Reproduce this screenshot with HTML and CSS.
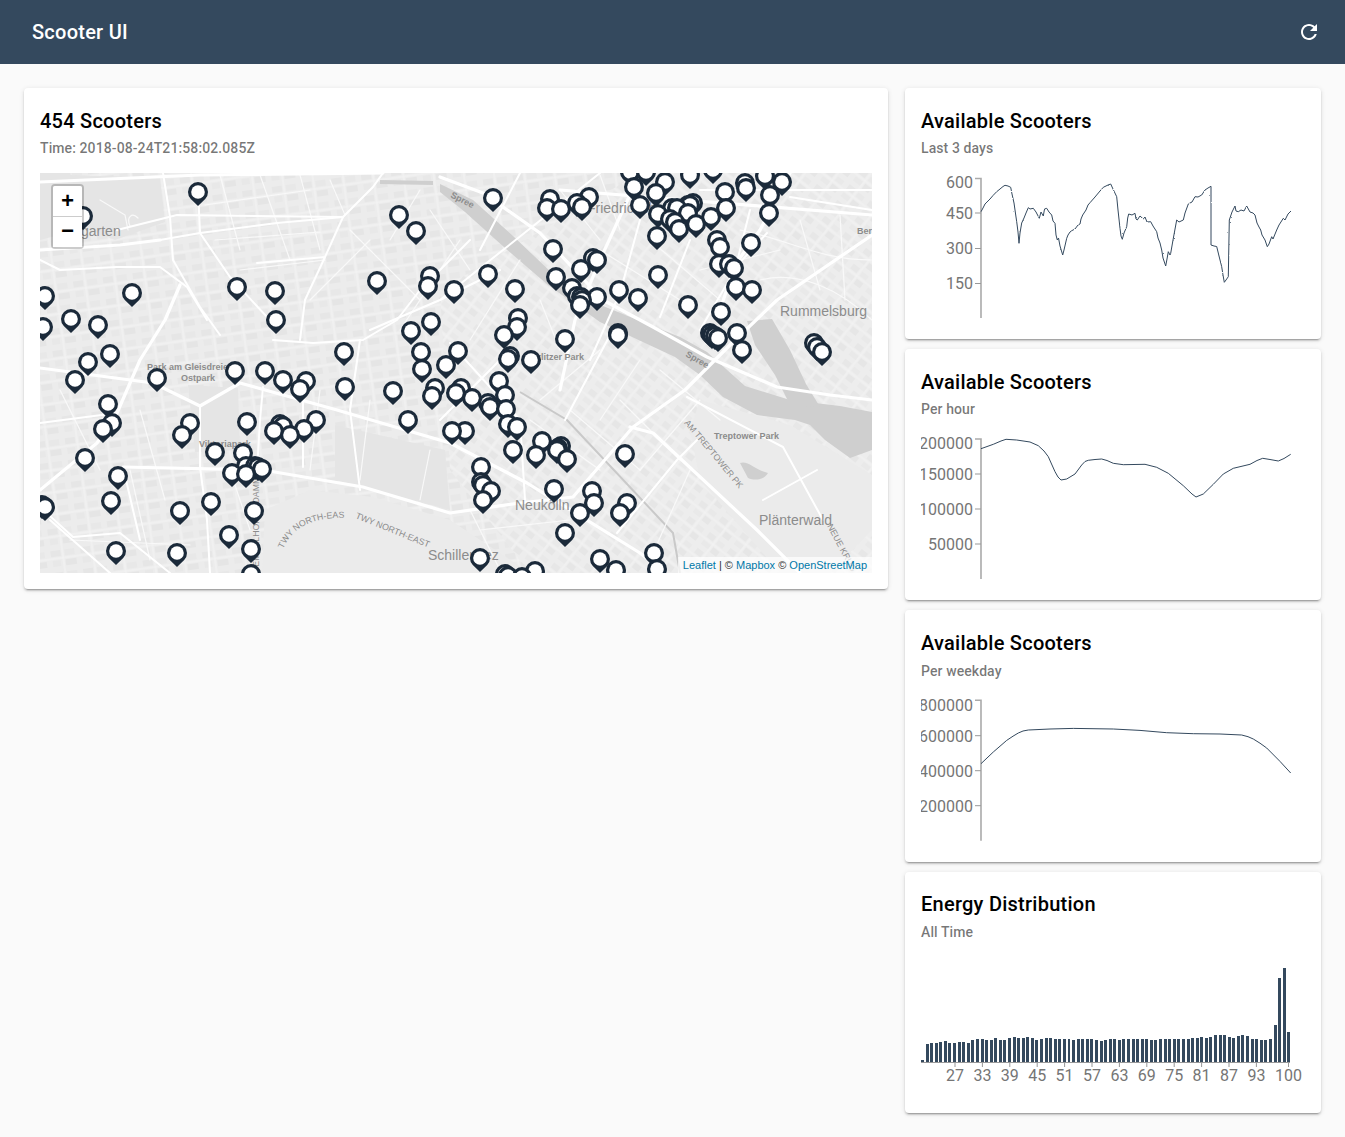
FILE: index.html
```html
<!DOCTYPE html>
<html lang="en">
<head>
<meta charset="utf-8">
<title>Scooter UI</title>
<link rel="stylesheet" href="styles.css">
</head>
<body>
<header class="appbar">
  <span class="appbar-title">Scooter UI</span>
  <button class="icon-button" aria-label="Refresh">
    <svg viewBox="0 0 24 24" width="24" height="24"><path d="M17.65 6.35C16.2 4.9 14.21 4 12 4c-4.42 0-7.99 3.58-7.99 8s3.57 8 7.99 8c3.73 0 6.84-2.55 7.73-6h-2.08c-.82 2.33-3.04 4-5.65 4-3.31 0-6-2.69-6-6s2.69-6 6-6c1.66 0 3.14.69 4.22 1.78L13 11h7V4l-2.35 2.35z"/></svg>
  </button>
</header>
<main class="layout">
  <section class="card">
    <h2 class="card-title">454 Scooters</h2>
    <p class="card-sub">Time: 2018-08-24T21:58:02.085Z</p>
    <div class="map">
      <svg class="map-svg" viewBox="40 173 832 400" width="832" height="400">
        <defs>
          <g id="pin">
            <path class="pin-o" d="M0 14L-7.2 7A10 10 0 1 1 7.2 7Z"/>
            <circle class="pin-i" r="6.8"/>
          </g>
          <pattern id="blocks" width="30" height="22" patternUnits="userSpaceOnUse" patternTransform="rotate(-8)">
            <rect width="30" height="22" fill="#ececec"/>
            <rect x="3" y="3" width="10" height="6" fill="#e6e6e6"/>
            <rect x="17" y="3" width="10" height="6" fill="#e8e8e8"/>
            <rect x="4" y="13" width="8" height="6" fill="#e8e8e8"/>
            <rect x="17" y="13" width="11" height="6" fill="#e5e5e5"/>
            <path d="M0 11H30M15 0V22" stroke="#f4f4f4" stroke-width="1" fill="none"/>
          </pattern>
          <pattern id="blocks2" width="26" height="20" patternUnits="userSpaceOnUse" patternTransform="rotate(38)">
            <rect width="26" height="20" fill="#ededed"/>
            <rect x="3" y="2" width="8" height="6" fill="#e7e7e7"/>
            <rect x="15" y="3" width="8" height="5" fill="#e9e9e9"/>
            <rect x="3" y="12" width="9" height="5" fill="#e9e9e9"/>
            <rect x="15" y="12" width="8" height="6" fill="#e6e6e6"/>
            <path d="M0 10H26M13 0V20" stroke="#f4f4f4" stroke-width="1" fill="none"/>
          </pattern>
        </defs>
        <rect x="40" y="173" width="832" height="400" fill="url(#blocks)"/>
        <path fill="url(#blocks2)" d="M440 290L640 173H872V573H530L450 470Z"/>
        <path class="park" d="M70 175L160 178L165 222L115 240L85 228Z"/>
        <path class="park" d="M40 172H70L85 228L40 240Z"/>
        <path class="park2" d="M265 510L310 490L373 497L450 520L530 573H262Z"/>
        <path class="park" d="M188 385L238 388L240 450L195 452Z"/>
        <path class="park" d="M335 425L445 450L450 510L375 490L335 480Z"/>
        <path class="park2" d="M700 400L790 425L872 475V530L830 573H780L700 480L690 430Z"/>
        <path class="water-line" d="M380 182L433 183"/>
        <path class="water" d="M440 184L473 200L513 236L553 274L603 306L680 337L707 352L745 386L790 400L840 406L872 412V450L850 458L825 440L810 425L795 420L757 415L723 397L700 375L675 357L600 322L548 285L505 248L465 212L440 192Z"/>
        <path class="water" d="M747 321L772 319L790 350L806 384L820 407L790 405L775 375L755 345Z"/>
        <path class="water" d="M740 463C748 460 755 470 768 473C764 480 755 481 748 478Z"/>
        <path class="rail" d="M520 392L567 420L673 533L680 573"/>
        <g class="road-sm">
          <path d="M100 200L125 215L128 230M130 226C126 217 132 212 138 218"/>
          <path d="M220 175L240 250M260 175L290 260M300 175L320 250M330 180L345 215M205 205L310 190M215 240L320 232M240 270L325 260M350 230L420 300M370 240L310 300M420 190L390 240M430 210L470 270M460 240L400 330M520 260L470 340"/>
          <path d="M740 230C790 240 820 260 872 260M760 280C800 270 840 290 872 320M800 220L820 290M840 215L845 300"/>
          <path d="M60 390L100 470M130 470L150 560M70 540L190 545M140 410L165 500M230 470L250 530M320 390L310 470M370 400L360 480M430 450L420 500"/>
          <path d="M470 510L500 570M480 530L570 520M530 420L600 470M570 410L640 470M620 400L680 460M690 470L650 560"/>
          <path d="M560 190L600 240M600 175L620 230M650 240L720 300M700 270L780 250M600 250L680 300M540 300L560 350M600 350L540 400M640 360L600 420M660 370L720 420M700 400L640 470"/>
        </g>
        <g class="road-md">
          <path d="M117 230L177 215L343 217L373 187L383 173"/>
          <path d="M160 240L200 233L277 223L343 217"/>
          <path d="M163 173L170 217L173 260L200 307L220 335"/>
          <path d="M198 190L200 233L230 277L267 317"/>
          <path d="M325 257L305 300L300 340M325 257L343 217M257 263L325 257"/>
          <path d="M40 260L60 270L117 267L160 267L187 287L207 320"/>
          <path d="M273 340L313 343L363 340L397 320L420 290L470 240"/>
          <path d="M440 300L600 173M370 330L440 300L500 270M520 173L480 250M640 220L620 293L590 360M690 240L660 317M750 210L735 270L700 330"/>
          <path d="M263 387L260 420L257 470M303 383L303 467M200 406L200 467L207 520L210 573"/>
          <path d="M40 507L73 537L120 533L170 573M50 520L110 573"/>
          <path d="M40 423L117 413M123 467L140 540"/>
          <path d="M790 197L872 210M767 233L733 270M700 190L872 190M450 343L520 420L525 500M500 360L440 420M360 340L350 410L360 490"/>
          <path d="M617 533L677 460L697 440M687 397L783 447L823 520M763 500L817 470M565 420L610 335"/>
        </g>
        <g class="road-lg">
          <path d="M40 368L153 383L200 406L240 383L337 410L450 443L527 483L640 553L665 573"/>
          <path d="M123 467L263 470L363 487L450 513L520 503L573 497L633 427L685 390L730 345L777 300L872 235"/>
          <path d="M630 427L653 433L757 530L800 573"/>
          <path d="M40 490L97 443L117 413L140 360L165 320L180 285"/>
          <path d="M440 177L483 193L540 233L603 300L653 327L707 357L777 387L830 395L872 400"/>
          <path d="M40 250L120 245L160 240M40 182L200 175L383 173"/>
          <path d="M640 173L600 260L575 320L560 390"/>
          <path d="M790 173L760 230L735 265L720 310"/>
          <path d="M560 190L872 215"/>
        </g>
        <g class="lbl">
          <text x="81" y="236">garten</text>
          <text x="587" y="213">Friedrichshain</text>
          <text x="780" y="316">Rummelsburg</text>
          <text x="515" y="510">Neukölln</text>
          <text x="759" y="525">Plänterwald</text>
          <text x="428" y="560">Schillerkiez</text>
        </g>
        <g class="lbl-s">
          <text x="147" y="370">Park am Gleisdreieck</text>
          <text x="198" y="381" text-anchor="middle">Ostpark</text>
          <text x="584" y="360" text-anchor="end">Görlitzer Park</text>
          <text x="199" y="447">Viktoriapark</text>
          <text x="714" y="439">Treptower Park</text>
          <text x="857" y="234">Ber</text>
          <text transform="translate(450 197) rotate(27)">Spree</text>
          <text transform="translate(685 356) rotate(30)">Spree</text>
        </g>
        <g class="lbl-t">
          <path id="twy" class="text-guide" d="M283 549Q297 516 346 518"/>
          <text><textPath href="#twy">TWY NORTH-EAST</textPath></text>
          <text transform="translate(684 423) rotate(50)">AM TREPTOWER PK</text>
          <text transform="translate(827 526) rotate(62)">NEUE KRUG</text>
          <text transform="translate(355 518) rotate(22)">TWY NORTH-EAST</text>
          <text transform="translate(259 572) rotate(-90)">TEMPELHOFER DAMM</text>
        </g>
        <g>
          <use href="#pin" x="713" y="170"/><use href="#pin" x="630" y="172"/><use href="#pin" x="646" y="172"/><use href="#pin" x="690" y="175"/><use href="#pin" x="765" y="176"/>
          <use href="#pin" x="665" y="182"/><use href="#pin" x="782" y="182"/><use href="#pin" x="745" y="183"/><use href="#pin" x="634" y="187"/><use href="#pin" x="746" y="188"/>
          <use href="#pin" x="725" y="192"/><use href="#pin" x="198" y="192"/><use href="#pin" x="656" y="193"/><use href="#pin" x="770" y="195"/><use href="#pin" x="589" y="197"/><use href="#pin" x="493" y="198"/><use href="#pin" x="550" y="199"/>
          <use href="#pin" x="577" y="203"/><use href="#pin" x="693" y="203"/><use href="#pin" x="640" y="205"/><use href="#pin" x="688" y="205"/><use href="#pin" x="690" y="205"/><use href="#pin" x="582" y="207"/><use href="#pin" x="672" y="208"/><use href="#pin" x="677" y="208"/><use href="#pin" x="726" y="208"/><use href="#pin" x="547" y="208"/><use href="#pin" x="561" y="209"/>
          <use href="#pin" x="769" y="213"/><use href="#pin" x="688" y="213"/><use href="#pin" x="658" y="214"/><use href="#pin" x="399" y="215"/><use href="#pin" x="83" y="216"/><use href="#pin" x="711" y="217"/><use href="#pin" x="670" y="219"/>
          <use href="#pin" x="675" y="222"/><use href="#pin" x="696" y="224"/><use href="#pin" x="679" y="229"/><use href="#pin" x="416" y="231"/><use href="#pin" x="657" y="236"/>
          <use href="#pin" x="717" y="240"/><use href="#pin" x="751" y="243"/><use href="#pin" x="720" y="247"/><use href="#pin" x="553" y="249"/><use href="#pin" x="593" y="258"/>
          <use href="#pin" x="597" y="260"/><use href="#pin" x="719" y="264"/><use href="#pin" x="729" y="264"/><use href="#pin" x="734" y="268"/><use href="#pin" x="581" y="269"/>
          <use href="#pin" x="488" y="274"/><use href="#pin" x="658" y="275"/><use href="#pin" x="430" y="276"/><use href="#pin" x="556" y="277"/>
          <use href="#pin" x="377" y="281"/><use href="#pin" x="428" y="286"/><use href="#pin" x="736" y="287"/><use href="#pin" x="237" y="287"/><use href="#pin" x="572" y="288"/>
          <use href="#pin" x="515" y="289"/><use href="#pin" x="619" y="290"/><use href="#pin" x="752" y="290"/><use href="#pin" x="454" y="290"/><use href="#pin" x="275" y="291"/><use href="#pin" x="132" y="293"/><use href="#pin" x="45" y="296"/><use href="#pin" x="577" y="296"/><use href="#pin" x="581" y="297"/><use href="#pin" x="597" y="297"/><use href="#pin" x="638" y="298"/><use href="#pin" x="582" y="300"/>
          <use href="#pin" x="580" y="305"/><use href="#pin" x="688" y="305"/><use href="#pin" x="721" y="312"/><use href="#pin" x="518" y="318"/><use href="#pin" x="71" y="319"/>
          <use href="#pin" x="276" y="320"/><use href="#pin" x="431" y="322"/><use href="#pin" x="98" y="325"/><use href="#pin" x="517" y="327"/><use href="#pin" x="43" y="327"/>
          <use href="#pin" x="411" y="331"/><use href="#pin" x="618" y="333"/><use href="#pin" x="710" y="333"/><use href="#pin" x="737" y="333"/><use href="#pin" x="504" y="335"/><use href="#pin" x="712" y="335"/><use href="#pin" x="618" y="335"/><use href="#pin" x="715" y="336"/><use href="#pin" x="718" y="338"/><use href="#pin" x="565" y="339"/>
          <use href="#pin" x="814" y="343"/><use href="#pin" x="817" y="347"/><use href="#pin" x="742" y="350"/><use href="#pin" x="458" y="351"/><use href="#pin" x="344" y="352"/><use href="#pin" x="421" y="352"/><use href="#pin" x="822" y="352"/><use href="#pin" x="110" y="354"/><use href="#pin" x="510" y="356"/><use href="#pin" x="508" y="359"/>
          <use href="#pin" x="531" y="360"/><use href="#pin" x="88" y="362"/><use href="#pin" x="446" y="365"/><use href="#pin" x="422" y="369"/><use href="#pin" x="235" y="371"/><use href="#pin" x="265" y="371"/><use href="#pin" x="157" y="378"/>
          <use href="#pin" x="75" y="380"/><use href="#pin" x="283" y="380"/><use href="#pin" x="306" y="381"/><use href="#pin" x="499" y="381"/><use href="#pin" x="345" y="387"/><use href="#pin" x="461" y="388"/><use href="#pin" x="435" y="388"/><use href="#pin" x="300" y="389"/>
          <use href="#pin" x="393" y="391"/><use href="#pin" x="456" y="393"/><use href="#pin" x="505" y="395"/><use href="#pin" x="432" y="396"/><use href="#pin" x="472" y="398"/><use href="#pin" x="488" y="403"/><use href="#pin" x="108" y="404"/><use href="#pin" x="490" y="407"/><use href="#pin" x="506" y="409"/>
          <use href="#pin" x="316" y="420"/><use href="#pin" x="408" y="420"/><use href="#pin" x="247" y="422"/><use href="#pin" x="112" y="423"/><use href="#pin" x="190" y="423"/><use href="#pin" x="280" y="424"/><use href="#pin" x="508" y="424"/><use href="#pin" x="283" y="426"/><use href="#pin" x="517" y="427"/>
          <use href="#pin" x="103" y="429"/><use href="#pin" x="304" y="429"/><use href="#pin" x="274" y="431"/><use href="#pin" x="465" y="431"/><use href="#pin" x="452" y="431"/><use href="#pin" x="182" y="435"/><use href="#pin" x="290" y="435"/>
          <use href="#pin" x="542" y="441"/><use href="#pin" x="561" y="446"/><use href="#pin" x="558" y="448"/><use href="#pin" x="513" y="450"/><use href="#pin" x="557" y="450"/><use href="#pin" x="215" y="452"/><use href="#pin" x="243" y="453"/><use href="#pin" x="625" y="454"/><use href="#pin" x="536" y="455"/><use href="#pin" x="85" y="458"/><use href="#pin" x="567" y="459"/>
          <use href="#pin" x="246" y="466"/><use href="#pin" x="255" y="466"/><use href="#pin" x="258" y="467"/><use href="#pin" x="481" y="467"/><use href="#pin" x="262" y="469"/><use href="#pin" x="232" y="473"/><use href="#pin" x="246" y="474"/><use href="#pin" x="118" y="476"/>
          <use href="#pin" x="481" y="482"/><use href="#pin" x="483" y="485"/><use href="#pin" x="554" y="489"/><use href="#pin" x="491" y="491"/><use href="#pin" x="592" y="491"/>
          <use href="#pin" x="483" y="500"/><use href="#pin" x="111" y="501"/><use href="#pin" x="211" y="502"/><use href="#pin" x="627" y="503"/><use href="#pin" x="594" y="503"/><use href="#pin" x="42" y="505"/><use href="#pin" x="45" y="507"/>
          <use href="#pin" x="180" y="511"/><use href="#pin" x="254" y="511"/><use href="#pin" x="580" y="513"/><use href="#pin" x="620" y="513"/><use href="#pin" x="565" y="533"/><use href="#pin" x="229" y="535"/><use href="#pin" x="251" y="549"/>
          <use href="#pin" x="116" y="551"/><use href="#pin" x="177" y="553"/><use href="#pin" x="654" y="553"/><use href="#pin" x="480" y="558"/><use href="#pin" x="600" y="559"/>
          <use href="#pin" x="657" y="569"/><use href="#pin" x="616" y="570"/><use href="#pin" x="535" y="571"/><use href="#pin" x="505" y="574"/><use href="#pin" x="251" y="574"/><use href="#pin" x="508" y="576"/><use href="#pin" x="522" y="577"/>
        </g>
      </svg>
      <div class="zoom-bar">
        <a class="zoom-btn zoom-in">+</a>
        <a class="zoom-btn zoom-out">−</a>
      </div>
      <div class="attribution"><a>Leaflet</a> | © <a>Mapbox</a> © <a>OpenStreetMap</a></div>
    </div>
  </section>

  <div class="side">
    <section class="card">
      <h2 class="card-title">Available Scooters</h2>
      <p class="card-sub">Last 3 days</p>
      <svg class="chart" viewBox="921 173 384 150.25">
        <defs>
          <filter id="noise" x="-2%" y="-5%" width="104%" height="110%">
            <feTurbulence type="fractalNoise" baseFrequency=".45" numOctaves="2" seed="4"/>
            <feDisplacementMap in="SourceGraphic" scale="1.8" xChannelSelector="R" yChannelSelector="G"/>
          </filter>
        </defs>
        <path class="axis" d="M975 178.5H981V318"/>
        <path class="tick" d="M975 213H981M975 248.5H981M975 283.5H981"/>
        <g class="tick-label">
          <text x="973" y="188">600</text>
          <text x="973" y="219">450</text>
          <text x="973" y="254">300</text>
          <text x="973" y="289">150</text>
        </g>
        <path class="line line-noisy" d="M981 211.7L983 208L985 204L987 202L990 199L993 195.500L996.700 191.700L1000 189L1003 186.500L1005 185.300L1008 186L1010.700 187.300L1012 194L1014 203L1015 210L1016 217L1016.700 221.700L1018 232L1019 243.300L1020 233L1021.700 223L1024 218L1026 213L1028.300 207.700L1030 209L1033.300 208.300L1036 212L1039.300 218.300L1041 212L1043.300 216L1044.500 209L1046.700 208.300L1049 212L1051.700 215L1053 221L1055 223.300L1056 235L1057.300 240L1058.500 238L1060 246L1062.700 255L1064 250L1066.700 238.300L1068 235L1070 232L1071.700 230.700L1075 229L1078 225L1080 224L1081 219L1082.700 215L1086 210L1088 205L1090 202.700L1095 197L1100 191L1103.300 187.300L1108 185L1110.700 184L1113 189L1116.700 196.700L1118 210L1120 228.300L1121 236L1122.300 239.300L1124 233L1126.700 226.700L1127.700 218L1128.700 214L1132 215L1135 213.300L1136 219L1137.300 220L1140 216L1143.300 219L1145 217L1147 222L1150.700 221.700L1153 226L1156.700 231.700L1158 238L1160 243L1161.700 250L1163 258L1165.700 266L1167 259L1168.300 251.700L1170 255L1170.700 253.300L1173 240L1176.700 220L1179 222L1183.300 220L1185 213L1188.300 204L1190 203L1192 202L1195 196.700L1198 197L1201.700 195L1205 190L1208 188L1211 186.300V245L1214 246L1216.700 246.500L1219 256L1221.700 266.700L1223 275L1224.300 282.300L1226 280L1228.300 276.700L1229.300 220L1232 212L1235 206L1236 211L1238.300 211.700L1241 210L1244 211L1246.700 206L1250 212L1253 213L1255 215L1257 223L1259 227L1260.700 230L1262 235L1265 240L1267.300 246.700L1269 244L1271.700 236.700L1273 239L1276.700 230L1279 225L1283.300 218.300L1285 220L1288 214L1291 211"/>
      </svg>
    </section>
    <section class="card">
      <h2 class="card-title">Available Scooters</h2>
      <p class="card-sub">Per hour</p>
      <svg class="chart" viewBox="921 434 384 150.25">
        <path class="axis" d="M975 439H981V579"/>
        <path class="tick" d="M975 474H981M975 509H981M975 544H981"/>
        <g class="tick-label">
          <text x="973" y="449">200000</text>
          <text x="973" y="480">150000</text>
          <text x="973" y="515">100000</text>
          <text x="973" y="550">50000</text>
        </g>
        <path class="line" d="M981 448.700L993.300 444.300L1001 441L1006 439.300L1016.700 440L1030 442L1038.300 445.700L1044 451L1048.300 456.700L1052 465L1055 471.700L1058 477L1061 480L1066.700 479L1075 474L1081.700 465L1085 461.500L1088.300 460.300L1095 459.500L1101.700 459L1107 460.500L1113.300 463.300L1123.300 464.700L1145 464.300L1156.700 467.300L1168.300 473.300L1183.300 485.700L1192 494L1196 497L1203.300 494L1213.300 484.300L1223.300 474L1233.300 468.300L1250 464.300L1257 460.500L1262.700 458.300L1270 459.500L1278.300 461L1284 458.500L1290.700 454.300"/>
      </svg>
    </section>
    <section class="card">
      <h2 class="card-title">Available Scooters</h2>
      <p class="card-sub">Per weekday</p>
      <svg class="chart" viewBox="921 695.300 384 150.25">
        <path class="axis" d="M975 700.500H981V841"/>
        <path class="tick" d="M975 736H981M975 771H981M975 806H981"/>
        <g class="tick-label">
          <text x="973" y="711">800000</text>
          <text x="973" y="742">600000</text>
          <text x="973" y="777">400000</text>
          <text x="973" y="812">200000</text>
        </g>
        <path class="line" d="M981 764L993.300 752.300L1006.700 740.700L1013 736.500L1018.300 733.300L1023 731.300L1028.300 730.300L1050 729.300L1073.300 728.700L1113.300 729.300L1140 730.700L1166.700 733L1193.300 734L1220 734.300L1241.700 735.300L1248 737L1253.300 739.300L1260 743.500L1266.700 748.300L1280 761.700L1290.700 773.300"/>
      </svg>
    </section>
    <section class="card card-last">
      <h2 class="card-title">Energy Distribution</h2>
      <p class="card-sub">All Time</p>
      <div class="histogram">
        <div class="bars">
          <i style="height:2px"></i><i style="height:18px"></i><i style="height:18.7px"></i><i style="height:19px"></i><i style="height:20px"></i><i style="height:20.7px"></i><i style="height:19px"></i><i style="height:18.7px"></i><i style="height:19.7px"></i><i style="height:19.7px"></i><i style="height:19.3px"></i>
          <i style="height:22.3px"></i><i style="height:22.7px"></i><i style="height:22.7px"></i><i style="height:22px"></i><i style="height:22.3px"></i><i style="height:23.7px"></i><i style="height:22.3px"></i><i style="height:22px"></i><i style="height:23.7px"></i><i style="height:25px"></i>
          <i style="height:24.3px"></i><i style="height:24.3px"></i><i style="height:24.7px"></i><i style="height:24px"></i><i style="height:21.7px"></i><i style="height:23px"></i><i style="height:23.7px"></i><i style="height:24px"></i><i style="height:22.7px"></i><i style="height:22.7px"></i>
          <i style="height:23px"></i><i style="height:22.7px"></i><i style="height:22.3px"></i><i style="height:23.3px"></i><i style="height:23px"></i><i style="height:22.7px"></i><i style="height:23px"></i><i style="height:22.3px"></i><i style="height:21px"></i><i style="height:21.7px"></i>
          <i style="height:23.3px"></i><i style="height:23px"></i><i style="height:22.3px"></i><i style="height:22.7px"></i><i style="height:23px"></i><i style="height:23px"></i><i style="height:22.7px"></i><i style="height:22.7px"></i><i style="height:22.7px"></i><i style="height:22px"></i>
          <i style="height:22px"></i><i style="height:22.7px"></i><i style="height:23px"></i><i style="height:22.7px"></i><i style="height:23px"></i><i style="height:23px"></i><i style="height:23.3px"></i><i style="height:22.7px"></i><i style="height:24px"></i><i style="height:24.3px"></i>
          <i style="height:24.7px"></i><i style="height:24.3px"></i><i style="height:25.3px"></i><i style="height:26.7px"></i><i style="height:27px"></i><i style="height:27.3px"></i><i style="height:25px"></i><i style="height:24.3px"></i><i style="height:26.3px"></i><i style="height:27px"></i>
          <i style="height:26.3px"></i><i style="height:23.3px"></i><i style="height:23.3px"></i><i style="height:21.7px"></i><i style="height:22px"></i><i style="height:23.3px"></i><i style="height:37.3px"></i><i style="height:83.7px"></i><i style="height:94px"></i><i style="height:30.3px"></i>
        </div>
        <svg class="hist-axis" viewBox="0 0 384 35">
          <path class="hist-tick" d="M0 .5H369M34 0V5M61.400 0V5M88.800 0V5M116.200 0V5M143.600 0V5M171 0V5M198.400 0V5M225.800 0V5M253.200 0V5M280.600 0V5M308 0V5M335.400 0V5M367.500 0V5"/>
          <g class="hist-label">
            <text x="34" y="19">27</text><text x="61.400" y="19">33</text><text x="88.800" y="19">39</text><text x="116.200" y="19">45</text><text x="143.600" y="19">51</text><text x="171" y="19">57</text><text x="198.400" y="19">63</text><text x="225.800" y="19">69</text><text x="253.200" y="19">75</text><text x="280.600" y="19">81</text><text x="308" y="19">87</text><text x="335.400" y="19">93</text><text x="367.500" y="19">100</text>
          </g>
        </svg>
      </div>
    </section>
  </div>
</main>
</body>
</html>
```

FILE: styles.css
```css
* { box-sizing: border-box; }
html, body { margin: 0; padding: 0; }
body {
  background: #fafafa;
  font-family: Roboto, "Liberation Sans", sans-serif;
  color: #000;
}
.appbar {
  height: 64px;
  background: #34495e;
  color: #fff;
  display: flex;
  align-items: center;
  justify-content: space-between;
  padding: 8px 12px 8px 32px;
}
.appbar-title {
  font-size: 20px;
  font-weight: 500;
  letter-spacing: .25px;
}
.icon-button {
  width: 48px;
  height: 48px;
  padding: 12px;
  border: 0;
  background: none;
  fill: #fff;
}
.icon-button svg { display: block; }
.layout {
  display: grid;
  grid-template-columns: 1fr 416px;
  column-gap: 17px;
  align-items: start;
  padding: 24px;
}
.side {
  display: flex;
  flex-direction: column;
  gap: 9.9px;
}
.card {
  background: #fff;
  border-radius: 4px;
  padding: 16px;
  box-shadow: 0 3px 1px -2px rgba(0,0,0,.2), 0 2px 2px 0 rgba(0,0,0,.14), 0 1px 5px 0 rgba(0,0,0,.12);
}
.card-last {
  margin-top: .1px;
  padding-top: 15.9px;
}
.card-title {
  margin: 0;
  font-size: 20px;
  line-height: 34px;
  font-weight: 500;
  letter-spacing: .25px;
}
.card-sub {
  margin: .25px 0 14.75px;
  font-size: 14px;
  line-height: 20px;
  font-weight: 500;
  letter-spacing: .1px;
  color: rgba(0,0,0,.54);
}
.map {
  position: relative;
  height: 400px;
  overflow: hidden;
  background: #eee;
}
.map-svg { display: block; }
.pin-o { fill: #1b2a3a; }
.pin-i { fill: #fff; }
.park { fill: #e5e5e5; }
.park2 { fill: #ebebeb; }
.water { fill: #cfcfcf; }
.water-line { fill: none; stroke: #cfcfcf; stroke-width: 4; }
.rail { fill: none; stroke: #c9c9c9; stroke-width: 2; }
.text-guide { fill: none; }
.road-sm path, .road-md path, .road-lg path { fill: none; stroke: #fff; stroke-linejoin: round; stroke-linecap: round; }
.road-sm path { stroke-width: 1.2; stroke: #f9f9f9; }
.road-md path { stroke-width: 2; }
.road-lg path { stroke-width: 3.2; }
.lbl text { font: 14px "Liberation Sans", sans-serif; fill: #8c8c8c; }
.lbl-s text { font: bold 9px "Liberation Sans", sans-serif; fill: #8c8c8c; }
.lbl-t text { font: 8.8px "Liberation Sans", sans-serif; fill: #8c8c8c; }
.zoom-bar {
  position: absolute;
  left: 11px;
  top: 11px;
  width: 33px;
  border: 2px solid rgba(0,0,0,.2);
  border-radius: 4px;
  background-clip: padding-box;
}
.zoom-btn {
  display: block;
  height: 30px;
  background: #fff;
  text-align: center;
  font: bold 22px/30px "Liberation Mono", monospace;
  color: #000;
}
.zoom-in {
  border-bottom: 1px solid #ccc;
  height: 31px;
  line-height: 33px;
  border-radius: 2px 2px 0 0;
}
.zoom-out { line-height: 32px; }
.attribution {
  position: absolute;
  right: 0;
  bottom: 0;
  height: 16px;
  padding: 0 5px;
  background: rgba(255,255,255,.7);
  font: 11px/16px "Liberation Sans", sans-serif;
  color: #333;
}
.attribution a { color: #0078a8; }
.chart {
  display: block;
  width: 384px;
  height: 150.25px;
}
.axis { fill: none; stroke: #aaa; stroke-width: 1.6; }
.tick { fill: none; stroke: #999; stroke-width: 1; }
.tick-label text {
  font: 16px Roboto, sans-serif;
  fill: #757575;
  text-anchor: end;
}
.line { fill: none; stroke: #34495e; stroke-width: 1; stroke-linejoin: round; }
.line-noisy { filter: url(#noise); }
.histogram { width: 384px; height: 140.5px; }
.bars {
  width: 369px;
  height: 105.5px;
  display: flex;
  align-items: flex-end;
  gap: 1.6px;
}
.bars i { flex: 1 1 0; background: #34495e; }
.hist-axis { display: block; width: 384px; height: 35px; overflow: visible; }
.hist-tick { fill: none; stroke: #999; stroke-width: 1; }
.hist-label text {
  font: 16px Roboto, sans-serif;
  fill: #757575;
  text-anchor: middle;
}
```
